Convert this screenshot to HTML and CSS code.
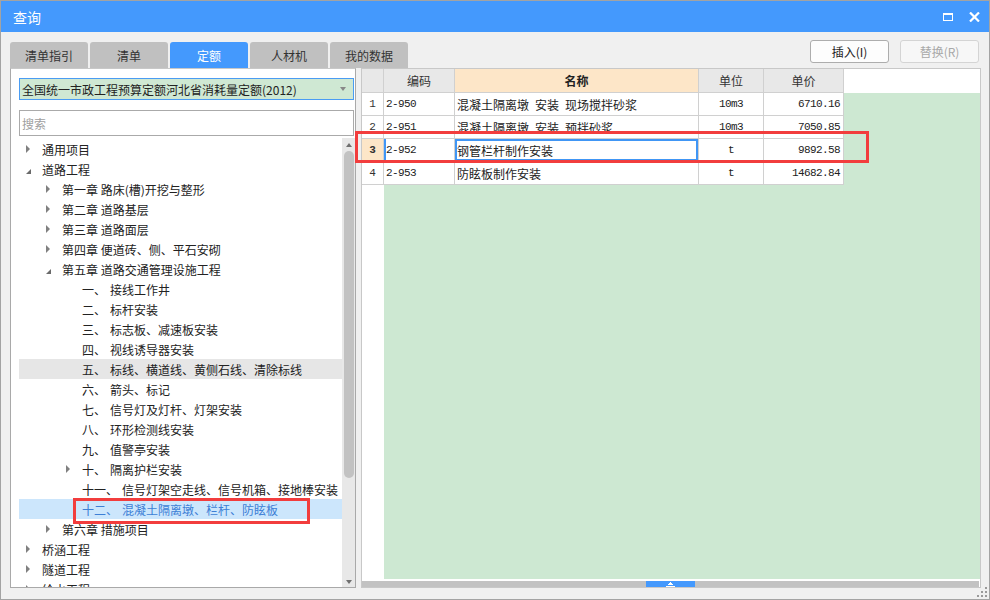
FILE: index.html
```html
<!DOCTYPE html>
<html lang="zh-CN">
<head>
<meta charset="utf-8">
<title>查询</title>
<link rel="stylesheet" href="styles.css">
</head>
<body>
<div class="window">
  <div class="titlebar">
    <span class="title">查询</span>
    <div class="winbtns">
      <span class="maxbtn"></span>
      <svg class="closebtn" width="11" height="10" viewBox="0 0 11 10"><path d="M1 0.5 L10 9.5 M10 0.5 L1 9.5" stroke="#fff" stroke-width="2.2" fill="none"/></svg>
    </div>
  </div>
  <div class="body">
    <div class="toolbar">
      <div class="tabs">
        <div class="tab">清单指引</div>
        <div class="tab">清单</div>
        <div class="tab active">定额</div>
        <div class="tab">人材机</div>
        <div class="tab">我的数据</div>
      </div>
      <div class="actions">
        <div class="btn">插入(I)</div>
        <div class="btn disabled">替换(R)</div>
      </div>
    </div>
    <div class="content">
      <div class="leftpanel">
        <div class="select"><span>全国统一市政工程预算定额河北省消耗量定额(2012)</span><span class="caret"></span></div>
        <div class="search">搜索</div>
        <div class="treewrap">
          <div class="tree">
            <div class="row l0"><span class="arw c"></span>通用项目</div>
            <div class="row l0"><span class="arw e"></span>道路工程</div>
            <div class="row l1"><span class="arw c"></span>第一章 路床(槽)开挖与整形</div>
            <div class="row l1"><span class="arw c"></span>第二章 道路基层</div>
            <div class="row l1"><span class="arw c"></span>第三章 道路面层</div>
            <div class="row l1"><span class="arw c"></span>第四章 便道砖、侧、平石安砌</div>
            <div class="row l1"><span class="arw e"></span>第五章 道路交通管理设施工程</div>
            <div class="row l2"><span class="arw"></span><span class="no">一、</span>接线工作井</div>
            <div class="row l2"><span class="arw"></span><span class="no">二、</span>标杆安装</div>
            <div class="row l2"><span class="arw"></span><span class="no">三、</span>标志板、减速板安装</div>
            <div class="row l2"><span class="arw"></span><span class="no">四、</span>视线诱导器安装</div>
            <div class="row l2 hover"><span class="arw"></span><span class="no">五、</span>标线、横道线、黄侧石线、清除标线</div>
            <div class="row l2"><span class="arw"></span><span class="no">六、</span>箭头、标记</div>
            <div class="row l2"><span class="arw"></span><span class="no">七、</span>信号灯及灯杆、灯架安装</div>
            <div class="row l2"><span class="arw"></span><span class="no">八、</span>环形检测线安装</div>
            <div class="row l2"><span class="arw"></span><span class="no">九、</span>值警亭安装</div>
            <div class="row l2"><span class="arw c"></span><span class="no">十、</span>隔离护栏安装</div>
            <div class="row l2"><span class="arw"></span><span class="no">十一、</span>信号灯架空走线、信号机箱、接地棒安装</div>
            <div class="row l2 selected"><span class="arw"></span><span class="no">十二、</span>混凝土隔离墩、栏杆、防眩板</div>
            <div class="row l1"><span class="arw c"></span>第六章 措施项目</div>
            <div class="row l0"><span class="arw c"></span>桥涵工程</div>
            <div class="row l0"><span class="arw c"></span>隧道工程</div>
            <div class="row l0"><span class="arw c"></span>给水工程</div>
          </div>
          <div class="vscroll">
            <span class="up"></span>
            <div class="thumb"></div>
            <span class="spacer"></span>
            <span class="down"></span>
          </div>
        </div>
      </div>
      <div class="rightpanel">
        <div class="sheet">
          <div class="rncol">
            <div class="hc rn"></div>
            <div class="rc rn">1</div>
            <div class="rc rn">2</div>
            <div class="rc rn cur">3</div>
            <div class="rc rn">4</div>
          </div>
          <div class="main">
            <div class="hdrrow">
              <div class="hc c-code">编码</div>
              <div class="hc c-name hot">名称</div>
              <div class="hc c-unit">单位</div>
              <div class="hc c-price">单价</div>
            </div>
            <div class="green">
              <div class="drow">
                <div class="rc c-code mono">2-950</div>
                <div class="rc c-name">混凝土隔离墩&ensp;安装&ensp;现场搅拌砂浆</div>
                <div class="rc c-unit mono">10m3</div>
                <div class="rc c-price mono">6710.16</div>
              </div>
              <div class="drow">
                <div class="rc c-code mono">2-951</div>
                <div class="rc c-name">混凝土隔离墩&ensp;安装&ensp;预拌砂浆</div>
                <div class="rc c-unit mono">10m3</div>
                <div class="rc c-price mono">7050.85</div>
              </div>
              <div class="drow">
                <div class="rc c-code mono focusrow">2-952</div>
                <div class="rc c-name focus">钢管栏杆制作安装</div>
                <div class="rc c-unit mono">t</div>
                <div class="rc c-price mono">9892.58</div>
              </div>
              <div class="drow">
                <div class="rc c-code mono">2-953</div>
                <div class="rc c-name">防眩板制作安装</div>
                <div class="rc c-unit mono">t</div>
                <div class="rc c-price mono">14682.84</div>
              </div>
            </div>
          </div>
        </div>
        <div class="hscroll">
          <div class="hthumb">
            <svg width="9" height="5" viewBox="0 0 9 5"><path d="M4 0h1v1h1v1h1v1H2V2h1V1h1z M0 4h9v1H0z" fill="#fff"/></svg>
          </div>
        </div>
      </div>
    </div>
  </div>
  <div class="redbox tree-box"></div>
  <div class="redbox table-box"></div>
  <svg class="grip" width="11" height="11" viewBox="0 0 11 11">
    <rect x="8" y="0" width="2" height="2" fill="#9a9a9a"/>
    <rect x="4" y="4" width="2" height="2" fill="#9a9a9a"/>
    <rect x="8" y="4" width="2" height="2" fill="#9a9a9a"/>
    <rect x="0" y="8" width="2" height="2" fill="#9a9a9a"/>
    <rect x="4" y="8" width="2" height="2" fill="#9a9a9a"/>
    <rect x="8" y="8" width="2" height="2" fill="#9a9a9a"/>
  </svg>
</div>
</body>
</html>
```

FILE: styles.css
```css
* { box-sizing: border-box; margin: 0; padding: 0; }
html, body { width: 990px; height: 600px; overflow: hidden; }
body {
  font-family: "Noto Sans CJK SC", "Microsoft YaHei", sans-serif;
  font-size: 12px;
  color: #222;
  background: #f0f0f0;
}
.window {
  position: relative;
  width: 990px;
  height: 600px;
  border: 1px solid #a3a3a3;
  display: flex;
  flex-direction: column;
  background: #f0f0f0;
}
.titlebar {
  height: 31px;
  flex: none;
  background: #4499fd;
  display: flex;
  align-items: center;
  justify-content: space-between;
  padding: 0 9px 0 12px;
  color: #fff;
}
.title { font-size: 14px; line-height: 1; }
.winbtns { display: flex; align-items: center; gap: 16px; }
.maxbtn {
  display: block;
  width: 10px;
  height: 8px;
  border: 1.5px solid #fff;
  border-top-width: 2.5px;
}
.closebtn { display: block; }

.body {
  flex: 1;
  display: flex;
  flex-direction: column;
  padding: 8px 8px 11px 9px;
}
.toolbar {
  height: 28px;
  flex: none;
  display: flex;
  justify-content: space-between;
}
.tabs { display: flex; gap: 2px; align-self: flex-end; }
.tab {
  width: 78px;
  height: 26px;
  background: #c0c0c0;
  border-radius: 3px 3px 0 0;
  display: flex;
  align-items: center;
  justify-content: center;
  color: #333;
  font-size: 12px;
}
.tab.active { background: #4499fd; color: #fff; }
.actions { display: flex; gap: 11px; margin-right: 2px; align-items: flex-start; }
.btn {
  width: 79px;
  height: 23px;
  border: 1px solid #adadad;
  border-radius: 3px;
  background: #fdfdfd;
  display: flex;
  align-items: center;
  justify-content: center;
  color: #222;
  font-size: 12px;
}
.btn.disabled { border-color: #d4d4d4; color: #a8a8a8; background: #f7f7f7; }

.content {
  height: 520px;
  flex: none;
  display: flex;
  gap: 5px;
}
.leftpanel {
  width: 346px;
  background: #fff;
  border: 1px solid #a9a9a9;
  border-top-color: #c8c8c8;
  padding: 9px 0 0 8px;
  display: flex;
  flex-direction: column;
}
.select {
  width: 335px;
  height: 22px;
  flex: none;
  border: 1px solid #4a9cf3;
  background: #cfe8d3;
  display: flex;
  align-items: center;
  justify-content: space-between;
  padding: 0 7px 0 2px;
  color: #222;
  font-size: 12px;
}
.caret {
  width: 0; height: 0;
  border-top: 4px solid #888;
  border-left: 3.5px solid transparent;
  border-right: 3.5px solid transparent;
}
.search {
  width: 335px;
  height: 26px;
  flex: none;
  margin-top: 10px;
  border: 1px solid #aaa;
  display: flex;
  align-items: center;
  padding-left: 2px;
  color: #a0a0a0;
}
.treewrap {
  margin-top: 2px;
  flex: 1;
  display: flex;
  min-height: 0;
}
.tree {
  width: 323px;
  padding-top: 1px;
  overflow: hidden;
}
.row {
  height: 20px;
  display: flex;
  align-items: center;
  white-space: nowrap;
  color: #222;
}
.row.l0 { padding-left: 5px; }
.row.l1 { padding-left: 25px; }
.row.l2 { padding-left: 45px; }
.row.hover { background: #e6e6e6; }
.row.selected { background: #cce6fc; color: #3d7fd6; }
.arw {
  width: 18px;
  height: 20px;
  flex: none;
  display: flex;
  align-items: center;
  padding-left: 2px;
}
.arw.c::before {
  content: "";
  width: 0; height: 0;
  border-left: 4px solid #808080;
  border-top: 4px solid transparent;
  border-bottom: 4px solid transparent;
}
.arw.e::before {
  content: "";
  width: 0; height: 0;
  margin-top: 4px;
  border-left: 5px solid transparent;
  border-bottom: 5px solid #6a6a6a;
}
.no { margin-right: 4px; }

.vscroll {
  width: 13px;
  background: #e8e8e8;
  display: flex;
  flex-direction: column;
  align-items: center;
  padding: 5px 0 3px;
}
.up, .down { width: 0; height: 0; border-left: 3.5px solid transparent; border-right: 3.5px solid transparent; }
.up { border-bottom: 4px solid #707070; }
.down { border-top: 4px solid #707070; }
.thumb {
  margin-top: 4px;
  width: 10px;
  height: 327px;
  border-radius: 5px;
  background: #c2c2c2;
}
.spacer { flex: 1; }

.rightpanel {
  width: 620px;
  background: #fff;
  border: 1px solid #c8c8c8;
  display: flex;
  flex-direction: column;
}
.sheet { height: 510px; display: flex; }
.rncol { width: 22px; flex: none; background: #fff; }
.main { flex: 1; display: flex; flex-direction: column; }
.hdrrow { display: flex; background: #fff; }
.green { flex: 1; background: #cde8d2; }
.drow { display: flex; }
.hc, .rc {
  border-right: 1px solid #d0d0d0;
  border-bottom: 1px solid #d0d0d0;
  display: flex;
  align-items: center;
  white-space: nowrap;
  background: #fff;
}
.hc { height: 24px; background: #e8e8e8; justify-content: center; color: #333; }
.hc.hot { background: #fde6c8; font-weight: bold; color: #222; }
.rc { height: 23px; }
.rn { width: 22px; justify-content: center; font-family: "Liberation Mono", monospace; font-size: 11px; color: #333; }
.hc.rn { background: #e8e8e8; }
.rc.rn.cur { background: #fde6c8; font-weight: bold; }
.c-code { width: 71px; padding-left: 2px; }
.c-name { width: 244px; padding-left: 2px; }
.hc.c-code, .hc.c-name { padding-left: 0; }
.c-unit { width: 65px; justify-content: center; }
.c-price { width: 80px; justify-content: flex-end; padding-right: 3px; }
.hc.c-price { justify-content: center; padding-right: 0; }
.mono { font-family: "Liberation Mono", monospace; font-size: 11px; letter-spacing: -0.6px; color: #222; }
.focusrow { box-shadow: inset 2px 0 0 #4096f5; }
.focus { box-shadow: inset 0 0 0 2px #4096f5; }

.hscroll {
  margin-top: 2px;
  margin-right: 1px;
  height: 6px;
  background: #c2c2c2;
  display: flex;
}
.hthumb {
  margin-left: 284px;
  width: 49px;
  height: 6px;
  background: #4499fd;
  display: flex;
  align-items: center;
  justify-content: center;
}
.hthumb svg { display: block; }

.redbox {
  position: absolute;
  border: 3px solid #f23d3d;
  pointer-events: none;
}
.tree-box { left: 72px; top: 497px; width: 237px; height: 26px; }
.table-box { left: 354px; top: 130px; width: 514px; height: 32px; }
.grip { position: absolute; right: 1px; bottom: 1px; }
```
